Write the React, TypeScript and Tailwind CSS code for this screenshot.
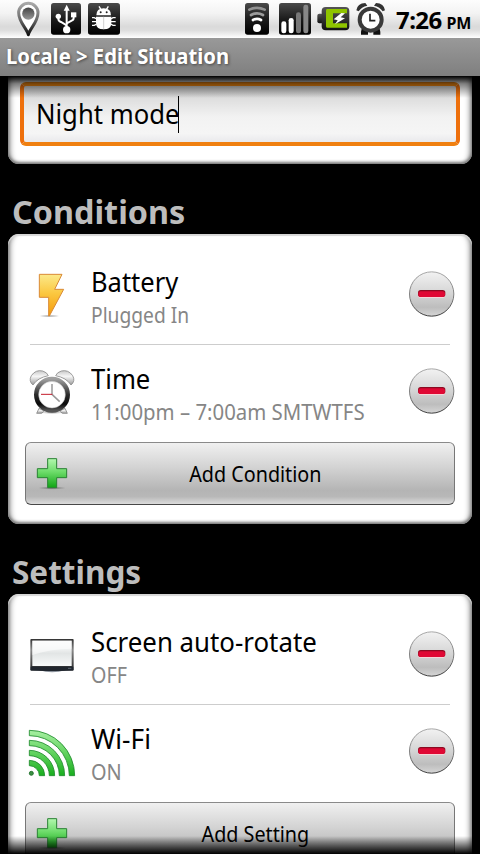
import React from "react";

const UsbIcon = () => (
  <svg width="30" height="38" viewBox="0 0 90 114">
    <defs>
      <linearGradient id="tile" x1="0" y1="0" x2="0" y2="1">
        <stop offset="0" stopColor="#4a4a4a" />
        <stop offset="0.5" stopColor="#1c1c1c" />
        <stop offset="1" stopColor="#000" />
      </linearGradient>
    </defs>
    <rect x="0" y="9" width="90" height="95" rx="8" fill="url(#tile)" />
    <g fill="none" stroke="#fff" strokeWidth="6">
      <path d="M47 28V88" />
      <path d="M22 50V56Q22 63 30 66L47 76" />
      <path d="M68 46V53Q68 60 62 62L47 70" />
    </g>
    <g fill="#fff">
      <path d="M47 14L56 32H38Z" />
      <circle cx="22" cy="49" r="8" />
      <rect x="60" y="37" width="16" height="15" />
      <circle cx="47" cy="89" r="11" />
    </g>
  </svg>
);

const PinIcon = () => (
  <svg width="24" height="38" viewBox="0 0 72 114">
    <defs>
      <linearGradient id="pin" x1="0" y1="0" x2="0" y2="1">
        <stop offset="0" stopColor="#a8a8a8" />
        <stop offset="0.5" stopColor="#6c6c6c" />
        <stop offset="1" stopColor="#111" />
      </linearGradient>
      <linearGradient id="pinDot" x1="0" y1="0" x2="0" y2="1">
        <stop offset="0" stopColor="#444" />
        <stop offset="1" stopColor="#999" />
      </linearGradient>
    </defs>
    <path
      d="M34 104C30 86 5 66 5 38A29 28 0 0 1 63 38C63 66 38 86 34 104Z"
      fill="#fff"
      stroke="url(#pin)"
      strokeWidth="9"
      strokeLinejoin="round"
    />
    <circle cx="34" cy="41" r="18.500" fill="url(#pinDot)" />
  </svg>
);

const BugIcon = () => (
  <svg width="32" height="38" viewBox="0 0 96 114">
    <rect x="0" y="9" width="96" height="95" rx="8" fill="url(#tile)" />
    <g stroke="#fff" strokeWidth="4" fill="none">
      <path d="M33 19L39 29M61 19L55 29" />
      <path d="M26 57L19 53H12M26 65H12M26 72L19 76H12" />
      <path d="M68 57L75 53H83M68 65H83M68 72L75 76H83" />
    </g>
    <path d="M25 46Q25 25 47 25Q69 25 69 46Z" fill="#fff" />
    <path d="M24 50H70V68Q70 88 47 88Q24 88 24 68Z" fill="#fff" />
    <path d="M47 50V88" stroke="#bbb" strokeWidth="2" />
    <circle cx="38" cy="37" r="3" fill="#222" />
    <circle cx="56" cy="37" r="3" fill="#222" />
  </svg>
);

const WifiStatusIcon = () => (
  <svg width="24" height="38" viewBox="0 0 72 114">
    <rect x="0" y="9" width="72" height="95" rx="8" fill="url(#tile)" />
    <g fill="none" strokeWidth="8" strokeLinecap="round">
      <path d="M13 29Q36 18 59 29" stroke="#929292" />
      <path d="M18 45Q36 35 54 45" stroke="#9c9c9c" />
      <path d="M24 60Q36 53 48 60" stroke="#fff" />
    </g>
    <circle cx="36" cy="84" r="12" fill="#fff" />
  </svg>
);

const SignalIcon = () => (
  <svg width="32" height="38" viewBox="0 0 96 114">
    <rect x="0" y="9" width="96" height="95" rx="8" fill="url(#tile)" />
    <rect x="7" y="64" width="15" height="36" rx="7" fill="#fff" />
    <rect x="29" y="54" width="15" height="46" rx="7" fill="#fff" />
    <rect x="51" y="37" width="15" height="63" rx="7" fill="#787878" />
    <rect x="73" y="14" width="15" height="86" rx="7" fill="#888" />
  </svg>
);

const BatteryStatusIcon = () => (
  <svg width="33" height="38" viewBox="0 0 99 114">
    <defs>
      <linearGradient id="cell" x1="0" y1="0" x2="0" y2="1">
        <stop offset="0" stopColor="#555" />
        <stop offset="0.5" stopColor="#333" />
        <stop offset="1" stopColor="#111" />
      </linearGradient>
    </defs>
    <rect x="1" y="41" width="18" height="29" rx="6" fill="url(#cell)" />
    <rect x="14" y="21" width="83" height="70" rx="12" fill="url(#cell)" />
    <path d="M30 27H90V40H48V70H90V83H30Q27 83 27 79V32Q27 27 30 27Z" fill="#8fc400" />
    <path d="M73 39L50 58L62 61L54 73L84 55L71 52L84 40Z" fill="#fff" />
  </svg>
);

const AlarmStatusIcon = () => (
  <svg width="30" height="38" viewBox="0 0 90 114">
    <g fill="#333">
      <path d="M1 31Q4 10 28 9L34 17Q16 21 8 34Z" />
      <path d="M87 31Q84 10 60 9L54 17Q72 21 80 34Z" />
      <path d="M17 87H36V104H15V95ZM71 87H52V104H73V95Z" fill="#111" />
    </g>
    <circle cx="44" cy="59" r="33" fill="#fff" stroke="#3a3a3a" strokeWidth="12" />
    <path d="M42 41V62H58" fill="none" stroke="#222" strokeWidth="5" />
  </svg>
);

const BoltIcon = () => (
  <svg width="46" height="46" viewBox="0 0 138 138">
    <defs>
      <linearGradient id="bolt" x1="0" y1="0" x2="0" y2="1">
        <stop offset="0" stopColor="#fce98a" />
        <stop offset="0.45" stopColor="#fbc841" />
        <stop offset="1" stopColor="#f59a0c" />
      </linearGradient>
      <radialGradient id="ground">
        <stop offset="0" stopColor="#000" stopOpacity="0.4" />
        <stop offset="1" stopColor="#000" stopOpacity="0" />
      </radialGradient>
    </defs>
    <ellipse cx="61" cy="132" rx="32" ry="4" fill="url(#ground)" />
    <path
      d="M31 7H99L77 52H104L61 132H59V76H31Z"
      fill="url(#bolt)"
      stroke="#d98a35"
      strokeWidth="3"
      strokeLinejoin="round"
    />
  </svg>
);

const ClockIcon = () => (
  <svg width="46" height="46" viewBox="0 0 138 138">
    <defs>
      <linearGradient id="bell" x1="0" y1="0" x2="0" y2="1">
        <stop offset="0" stopColor="#c8c8c8" />
        <stop offset="0.4" stopColor="#f6f6f6" />
        <stop offset="1" stopColor="#999" />
      </linearGradient>
      <linearGradient id="ring" x1="0" y1="0" x2="0" y2="1">
        <stop offset="0" stopColor="#a0a0a0" />
        <stop offset="0.5" stopColor="#2c2c2c" />
        <stop offset="0.8" stopColor="#0a0a0a" />
        <stop offset="1" stopColor="#555" />
      </linearGradient>
    </defs>
    <g stroke="#8a8a8a" strokeWidth="2.500" fill="url(#bell)">
      <path d="M12 48Q-2 36 7 20Q20 1 41 6Q54 10 58 20Q26 26 12 48Z" />
      <path d="M126 48Q140 36 131 20Q118 1 97 6Q84 10 80 20Q112 26 126 48Z" />
      <path d="M30 118L23 133H38L46 126ZM108 118L115 133H100L92 126Z" />
    </g>
    <ellipse cx="69" cy="131" rx="38" ry="4" fill="url(#ground)" />
    <circle cx="69" cy="77" r="47" fill="#fff" stroke="url(#ring)" strokeWidth="14" />
    <circle cx="69" cy="77" r="40" fill="none" stroke="#bbb" strokeWidth="1.500" />
    <path d="M69 77V45" stroke="#8c8c8c" strokeWidth="4" />
    <path d="M69 76L92 98" stroke="#999" strokeWidth="4.500" />
    <path d="M70 76H36" stroke="#c41c2c" strokeWidth="3" />
  </svg>
);

const ScreenIcon = () => (
  <svg width="46" height="46" viewBox="0 0 138 138">
    <defs>
      <linearGradient id="glass" x1="0" y1="0" x2="0" y2="1">
        <stop offset="0" stopColor="#fafafa" />
        <stop offset="0.35" stopColor="#eef0f0" />
        <stop offset="0.5" stopColor="#e2e5e5" />
        <stop offset="1" stopColor="#f8fafa" />
      </linearGradient>
      <linearGradient id="bezel" x1="0" y1="0" x2="0" y2="1">
        <stop offset="0" stopColor="#333" />
        <stop offset="0.35" stopColor="#8a8a8a" />
        <stop offset="0.8" stopColor="#444" />
        <stop offset="1" stopColor="#1a1f26" />
      </linearGradient>
    </defs>
    <path d="M30 114Q69 128 110 114Z" fill="#8b929c" />
    <rect x="4" y="21" width="130" height="95" rx="3" fill="url(#bezel)" />
    <rect x="10" y="26" width="118" height="76" fill="url(#glass)" />
    <path d="M10 26H128V50Q60 51 10 69Z" fill="#fff" opacity="0.55" />
    <path d="M5 104H133V114Q69 120 5 114Z" fill="#20262e" />
    <path d="M117 109H127" stroke="#7d8996" strokeWidth="2" />
  </svg>
);

const WifiIcon = () => (
  <svg className="-ml-px" width="48" height="48" viewBox="-3 -3 144 144">
    <defs>
      <linearGradient id="wave" gradientUnits="userSpaceOnUse" x1="0" y1="0" x2="0" y2="138">
        <stop offset="0" stopColor="#a9f0a4" />
        <stop offset="0.5" stopColor="#62d35f" />
        <stop offset="1" stopColor="#17ad1c" />
      </linearGradient>
    </defs>
    <g fill="url(#wave)" stroke="#1f8a2c" strokeWidth="2.500">
      <path d="M1 1A136 136 0 0 1 137 137H121A120 120 0 0 0 1 17Z" />
      <path d="M1 31A106 106 0 0 1 107 137H91A90 90 0 0 0 1 47Z" />
      <path d="M1 61A76 76 0 0 1 77 137H61A60 60 0 0 0 1 77Z" />
      <path d="M1 91A46 46 0 0 1 47 137H31A30 30 0 0 0 1 107Z" />
      <circle cx="7" cy="130" r="6" fill="#3c8f43" stroke="#176a22" />
    </g>
  </svg>
);

const PlusIcon = () => (
  <svg width="32" height="34" viewBox="0 0 96 102">
    <defs>
      <linearGradient id="plus" x1="0" y1="0" x2="0" y2="1">
        <stop offset="0" stopColor="#b4f8b0" />
        <stop offset="0.45" stopColor="#6edc6b" />
        <stop offset="1" stopColor="#10a514" />
      </linearGradient>
    </defs>
    <ellipse cx="48" cy="93" rx="42" ry="5" fill="url(#ground)" />
    <path
      d="M35 5H62V35H92V62H62V92H35V62H4V35H35Z"
      fill="url(#plus)"
      stroke="#2a8233"
      strokeWidth="3"
    />
  </svg>
);

const RemoveButton = () => (
  <button className="mt-[23px] h-[46px] w-[46px]">
    <svg width="46" height="46" viewBox="0 0 138 138">
      <defs>
        <linearGradient id="knob" x1="0" y1="0" x2="0" y2="1">
          <stop offset="0" stopColor="#f2f2f2" />
          <stop offset="0.5" stopColor="#d4d4d4" />
          <stop offset="0.8" stopColor="#bdbdbd" />
          <stop offset="1" stopColor="#d6d6d6" />
        </linearGradient>
        <linearGradient id="knobEdge" x1="0" y1="0" x2="0" y2="1">
          <stop offset="0" stopColor="#a8a8a8" />
          <stop offset="0.6" stopColor="#777" />
          <stop offset="1" stopColor="#3c3c3c" />
        </linearGradient>
      </defs>
      <circle cx="68" cy="69" r="66.500" fill="url(#knob)" stroke="url(#knobEdge)" strokeWidth="3" />
      <rect x="27" y="60" width="82" height="21" rx="8" fill="#f7d5d8" />
      <rect x="27" y="57" width="82" height="21" rx="8" fill="#8c0b22" />
      <rect x="28" y="61" width="80" height="17" rx="7" fill="#e00834" />
    </svg>
  </button>
);

const Row = ({
  icon,
  title,
  titleClass,
  detail,
  detailClass,
  last,
}: {
  icon: React.ReactNode;
  title: string;
  titleClass: string;
  detail: string;
  detailClass: string;
  last?: boolean;
}) => {
  return (
    <div
      className={
        last
          ? "ml-[21px] mr-[17px] flex h-[97px]"
          : "relative ml-[21px] mr-[17px] flex h-[97px] after:absolute after:bottom-0 after:left-px after:h-px after:w-[420px] after:bg-[#cdcdcd]"
      }
    >
      <div className="mt-[24px] w-[62px] shrink-0">{icon}</div>
      <div className="flex flex-1 flex-col pt-[16px] whitespace-nowrap">
        <h3 className={`h-[36px] origin-left text-[27px] leading-[35px] text-black ${titleClass}`}>
          {title}
        </h3>
        <p className={`h-[30px] origin-left text-[21px] leading-[31px] text-[#868686] ${detailClass}`}>
          {detail}
        </p>
      </div>
      <RemoveButton />
    </div>
  );
};

const AddButton = ({ label }: { label: string }) => {
  return (
    <button className="mx-[17px] flex h-[63px] w-[430px] items-center rounded-[6px] border border-x-[#777] border-t-[#8a8a8a] border-b-[#484848] bg-[linear-gradient(#f0f0f0,#d3d3d3_40%,#b4b4b4_78%,#b8b8b8_88%,#dcdcdc)] pl-[10px]">
      <PlusIcon />
      <span className="flex-1 scale-x-[0.94] pt-[2px] pr-[20px] pl-[8px] text-center text-[21px] whitespace-nowrap text-black">
        {label}
      </span>
    </button>
  );
};

const Section = ({
  title,
  titleClass,
  children,
}: {
  title: string;
  titleClass: string;
  children: React.ReactNode;
}) => {
  return (
    <section>
      <h2
        className={`ml-3 flex h-[70px] origin-left items-end pb-[1px] text-[33px] leading-[42px] font-bold text-[#bdbdbd] ${titleClass}`}
      >
        {title}
      </h2>
      <div className="mx-2 h-[290px] rounded-[11px] bg-white pt-[14px] shadow-[inset_0_2px_1px_#d6d6d6,inset_0_-2px_3px_#777,inset_7px_0_6px_-6px_#555,inset_-7px_0_6px_-6px_#555]">
        {children}
      </div>
    </section>
  );
};

export default function App() {
  return (
    <div className="flex h-[854px] w-[480px] flex-col overflow-hidden bg-black font-['Noto_Sans','Open_Sans',sans-serif]">
      {/* status bar */}
      <div className="flex h-[38px] shrink-0 items-center bg-[linear-gradient(#fdfdfd,#f3f3f3_35%,#dadada_70%,#dedede_80%,#fff)] pl-[17px]">
        <PinIcon />
        <div className="ml-[10px]">
          <UsbIcon />
        </div>
        <div className="ml-[7px]">
          <BugIcon />
        </div>
        <div className="ml-[125px]">
          <WifiStatusIcon />
        </div>
        <div className="ml-[10px]">
          <SignalIcon />
        </div>
        <div className="ml-[6px]">
          <BatteryStatusIcon />
        </div>
        <div className="ml-[6px]">
          <AlarmStatusIcon />
        </div>
        <div className="ml-[10px] flex items-baseline pt-px font-bold whitespace-nowrap text-black">
          <span className="text-[24px] leading-[38px] tracking-[-0.6px]">7:26</span>
          <span className="ml-[5px] text-[16px] tracking-[-0.3px]">PM</span>
        </div>
      </div>

      <div className="h-[38px] w-full shrink-0 bg-[linear-gradient(#999,#7f7f7f)] pl-[6px]">
        <h1 className="origin-left scale-x-[0.965] text-[21px] leading-[37px] font-bold whitespace-nowrap text-white [text-shadow:1px_1px_3px_#444]">
          Locale &gt; Edit Situation
        </h1>
      </div>

      {/* scrolled content */}
      <div className="relative h-[778px] overflow-hidden">
        <div className="mx-2 h-[88px] rounded-b-[11px] bg-white px-3 pt-[6px] shadow-[inset_0_-2px_3px_#777,inset_7px_0_6px_-6px_#555,inset_-7px_0_6px_-6px_#555]">
          <div className="flex h-[64px] items-center rounded-[6px] border-4 border-x-[#ee700c] border-t-[#f58a12] border-b-[#f08010] bg-[linear-gradient(#d0d0d0,#f2f2f2_55%,#f5f5f5_85%,#e9e9ec)] pl-[12px]">
            <span className="w-[142px] origin-left scale-x-[0.95] pt-px text-[27px] whitespace-nowrap text-black">
              Night mode
            </span>
            <span className="h-[37px] w-px bg-black"></span>
          </div>
        </div>

        <Section title="Conditions" titleClass="scale-x-[0.98]">
          <Row
            icon={<BoltIcon />}
            title="Battery"
            titleClass="scale-x-[0.945]"
            detail="Plugged In"
            detailClass="scale-x-[0.915]"
          />
          <Row
            icon={<ClockIcon />}
            title="Time"
            titleClass="scale-x-[0.95]"
            detail="11:00pm – 7:00am SMTWTFS"
            detailClass="scale-x-[0.97]"
            last
          />
          <AddButton label="Add Condition" />
        </Section>

        <Section title="Settings" titleClass="scale-x-[0.955]">
          <Row
            icon={<ScreenIcon />}
            title="Screen auto-rotate"
            titleClass="scale-x-[0.957]"
            detail="OFF"
            detailClass="scale-x-[0.94]"
          />
          <Row
            icon={<WifiIcon />}
            title="Wi-Fi"
            titleClass="scale-x-[0.97]"
            detail="ON"
            detailClass="scale-x-[0.95]"
            last
          />
          <AddButton label="Add Setting" />
        </Section>

        {/* scroll edges */}
        <div className="absolute inset-x-0 top-0 h-[22px] bg-[linear-gradient(#000,rgba(0,0,0,0.5)_35%,transparent)]"></div>
        <div className="absolute inset-x-0 bottom-0 h-[18px] bg-[linear-gradient(transparent,rgba(0,0,0,0.6)_60%,#000)]"></div>
      </div>
    </div>
  );
}
